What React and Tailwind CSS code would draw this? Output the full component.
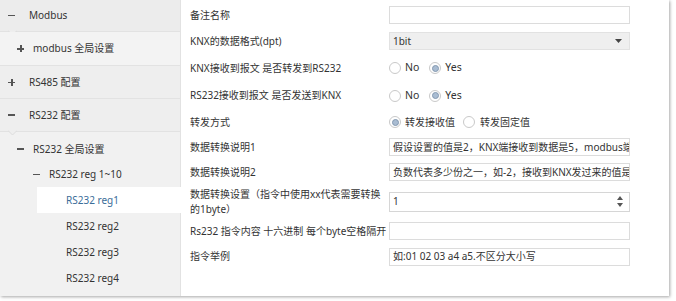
import React from "react";

const font = { fontFamily: '"Noto Sans", "Noto Sans CJK SC", sans-serif' };

function Minus() {
  return <span className="inline-block w-[7px] h-[1.5px] bg-[#555]"></span>;
}

function Plus() {
  return (
    <span className="relative inline-block w-[7px] h-[7px]">
      <span className="absolute left-0 top-[3px] w-[7px] h-[1.5px] bg-[#555]"></span>
      <span className="absolute left-[3px] top-0 w-[1.5px] h-[7px] bg-[#555]"></span>
    </span>
  );
}

function Notch() {
  return (
    <svg className="absolute left-[8px] -bottom-[5px]" width="9" height="6" viewBox="0 0 9 6">
      <path d="M0 0.5 L4.5 5 L9 0.5" fill="#eeeeee" stroke="#dcdcdc" strokeWidth="1" />
    </svg>
  );
}

function TopRow({ icon, text, pad, bg, notch, h }) {
  return (
    <div className={`relative flex items-center border-b border-[#e2e2e2] ${bg} ${h}`}>
      <div className={`flex items-center ${pad}`}>{icon}</div>
      <span className="text-[10px] text-[#333]">{text}</span>
      {notch && <Notch />}
    </div>
  );
}

function Radio({ checked }) {
  return (
    <span className="flex items-center justify-center w-[12px] h-[12px] rounded-full border border-[#c9c9c9] bg-white">
      {checked && <span className="w-[7px] h-[7px] rounded-full bg-[#a9bcd2] border border-[#8398b0]"></span>}
    </span>
  );
}

function Field({ h, label, children, wrap }) {
  return (
    <div className={`flex items-center ${h}`}>
      <div className={`w-[199px] pr-[4px] text-[10px] text-[#333] ${wrap ? "leading-[15px]" : "whitespace-nowrap"}`}>
        {label}
      </div>
      <div className="w-[241px]">{children}</div>
    </div>
  );
}

function TextBox({ value }) {
  return (
    <div className="h-[18px] border border-[#dcdcdc] bg-white px-[3px] flex items-center overflow-hidden whitespace-nowrap text-[10px] text-[#333]">
      {value}
    </div>
  );
}

export default function App() {
  return (
    <div className="w-[676px] h-[301px] bg-white overflow-hidden" style={font}>
      <div className="w-[669px] h-[296px] flex shadow-[1px_1px_3px_rgba(0,0,0,0.35)]">
        <div className="w-[181px] h-full bg-[#f1f1f1] border-r border-[#e2e2e2] flex flex-col">
          <TopRow h="h-[32px]" bg="bg-[#ececec]" pad="pl-[8px] w-[29px]" icon={<Minus />} text="Modbus" notch />
          <TopRow h="h-[34px]" bg="bg-[#f3f3f3]" pad="pl-[17px] w-[33px]" icon={<Plus />} text="modbus 全局设置" />
          <TopRow h="h-[33px]" bg="bg-[#eeeeee]" pad="pl-[8px] w-[29px]" icon={<Plus />} text="RS485 配置" />
          <TopRow h="h-[33px]" bg="bg-[#eeeeee]" pad="pl-[8px] w-[29px]" icon={<Minus />} text="RS232 配置" notch />
          <div className="flex flex-col pt-[4px] text-[10px] text-[#333]">
            <div className="flex items-center h-[26px]">
              <div className="pl-[17px] w-[33px] flex items-center"><Minus /></div>
              <span>RS232 全局设置</span>
            </div>
            <div className="flex items-center h-[25px]">
              <div className="pl-[33px] w-[49px] flex items-center"><Minus /></div>
              <span>RS232 reg 1~10</span>
            </div>
            <div className="flex items-center h-[26px] ml-[37px] -mr-px bg-white pl-[29px] text-[#3b6d99]">
              RS232 reg1
            </div>
            <div className="flex items-center h-[26px] pl-[66px]">RS232 reg2</div>
            <div className="flex items-center h-[26px] pl-[66px]">RS232 reg3</div>
            <div className="flex items-center h-[26px] pl-[66px]">RS232 reg4</div>
          </div>
        </div>

        <div className="flex-1 h-full bg-white pl-[9px] pt-[2px] flex flex-col">
          <Field h="h-[26px]" label="备注名称">
            <TextBox value="" />
          </Field>
          <Field h="h-[26px]" label="KNX的数据格式(dpt)">
            <div className="h-[18px] border border-[#e2e2e2] bg-[#efefef] pl-[3px] pr-[7px] flex items-center justify-between text-[10px] text-[#333]">
              <span>1bit</span>
              <svg width="7" height="4" viewBox="0 0 7 4"><path d="M0 0 H7 L3.5 4 Z" fill="#444" /></svg>
            </div>
          </Field>
          <Field h="h-[28px]" label="KNX接收到报文 是否转发到RS232">
            <div className="flex items-center text-[10.5px] text-[#333]">
              <Radio />
              <span className="ml-[4px] mr-[10px]">No</span>
              <Radio checked />
              <span className="ml-[4px]">Yes</span>
            </div>
          </Field>
          <Field h="h-[27px]" label="RS232接收到报文 是否发送到KNX">
            <div className="flex items-center text-[10.5px] text-[#333]">
              <Radio />
              <span className="ml-[4px] mr-[10px]">No</span>
              <Radio checked />
              <span className="ml-[4px]">Yes</span>
            </div>
          </Field>
          <Field h="h-[26px]" label="转发方式">
            <div className="flex items-center text-[10px] text-[#333]">
              <Radio checked />
              <span className="ml-[4px] mr-[8px]">转发接收值</span>
              <Radio />
              <span className="ml-[5px]">转发固定值</span>
            </div>
          </Field>
          <Field h="h-[24px]" label="数据转换说明1">
            <TextBox value="假设设置的值是2，KNX端接收到数据是5，modbus端发送的数据是10" />
          </Field>
          <Field h="h-[26px]" label="数据转换说明2">
            <TextBox value="负数代表多少份之一，如-2，接收到KNX发过来的值是10，发送的值是5" />
          </Field>
          <Field h="h-[33px]" wrap label="数据转换设置（指令中使用xx代表需要转换的1byte）">
            <div className="h-[20px] border border-[#d6d6d6] bg-white pl-[3px] pr-[6px] flex items-center justify-between text-[10px] text-[#333]">
              <span>1</span>
              <span className="flex flex-col gap-[3px]">
                <svg width="6" height="4" viewBox="0 0 6 4"><path d="M0 4 H6 L3 0 Z" fill="#555" /></svg>
                <svg width="6" height="4" viewBox="0 0 6 4"><path d="M0 0 H6 L3 4 Z" fill="#555" /></svg>
              </span>
            </div>
          </Field>
          <Field h="h-[26px]" label="Rs232 指令内容 十六进制 每个byte空格隔开">
            <TextBox value="" />
          </Field>
          <Field h="h-[25px]" label="指令举例">
            <TextBox value="如:01 02 03 a4 a5.不区分大小写" />
          </Field>
        </div>
      </div>
    </div>
  );
}
